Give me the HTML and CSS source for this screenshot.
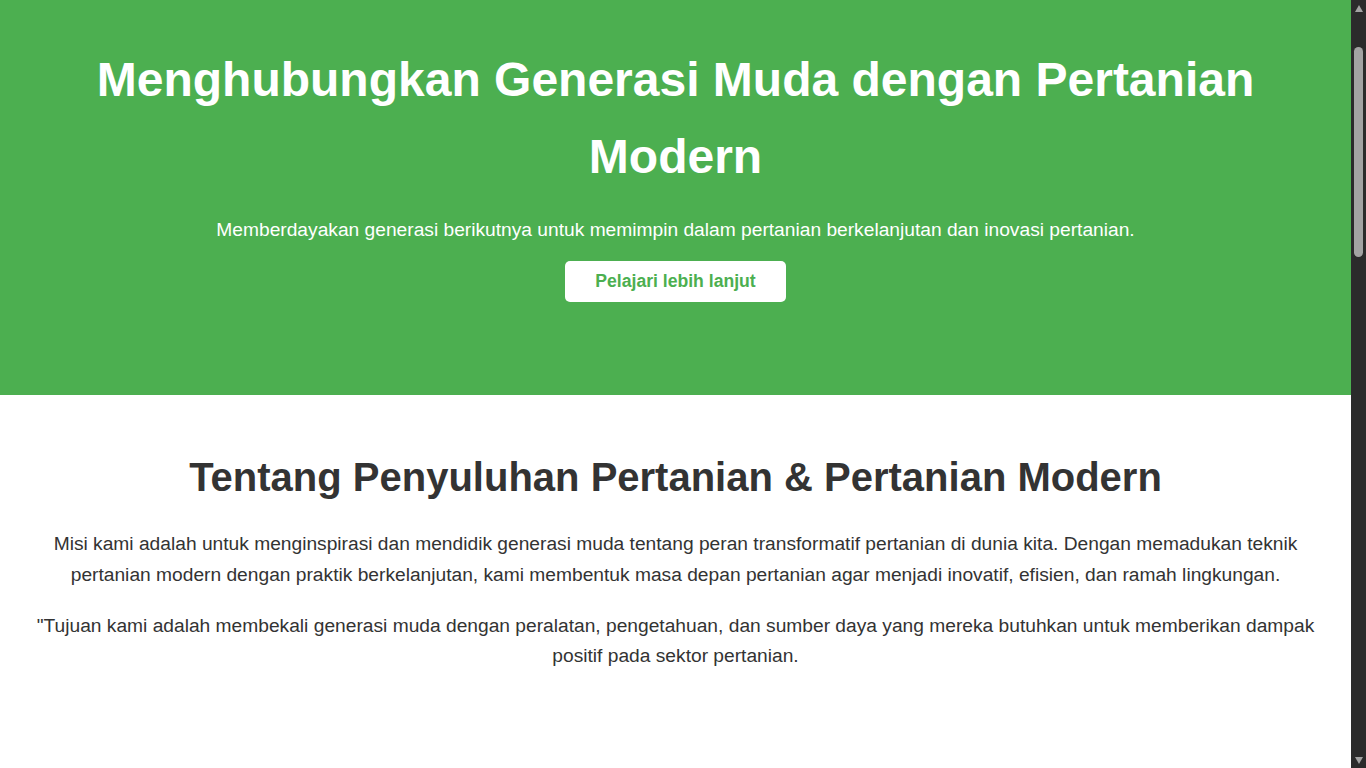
FILE: index.html
```html
<!DOCTYPE html>
<html lang="id">
<head>
<meta charset="UTF-8">
<title>Penyuluhan Pertanian &amp; Pertanian Modern</title>
<link rel="stylesheet" href="styles.css">
</head>
<body>
<div class="page">
  <header class="hero">
    <h1 class="hero-title">Menghubungkan Generasi Muda dengan Pertanian Modern</h1>
    <p class="hero-text">Memberdayakan generasi berikutnya untuk memimpin dalam pertanian berkelanjutan dan inovasi pertanian.</p>
    <button class="hero-button">Pelajari lebih lanjut</button>
  </header>
  <section class="about">
    <h2 class="section-title">Tentang Penyuluhan Pertanian &amp; Pertanian Modern</h2>
    <p class="section-text">Misi kami adalah untuk menginspirasi dan mendidik generasi muda tentang peran transformatif pertanian di dunia kita. Dengan memadukan teknik pertanian modern dengan praktik berkelanjutan, kami membentuk masa depan pertanian agar menjadi inovatif, efisien, dan ramah lingkungan.</p>
    <p class="section-text">"Tujuan kami adalah membekali generasi muda dengan peralatan, pengetahuan, dan sumber daya yang mereka butuhkan untuk memberikan dampak positif pada sektor pertanian.</p>
  </section>
  <section class="programs">
    <h2 class="section-title">Program Kami</h2>
    <div class="cards">
      <div class="card"><h3>Pertanian Cerdas</h3><p>Belajar menggunakan teknologi sensor dan data untuk meningkatkan hasil panen.</p></div>
      <div class="card"><h3>Hidroponik</h3><p>Teknik budidaya tanaman tanpa tanah yang hemat air dan ruang.</p></div>
      <div class="card"><h3>Agribisnis</h3><p>Mengembangkan usaha pertanian yang menguntungkan dan berkelanjutan.</p></div>
    </div>
  </section>
  <section class="contact">
    <h2 class="section-title">Hubungi Kami</h2>
    <p class="section-text">Bergabunglah bersama kami untuk membangun masa depan pertanian Indonesia.</p>
  </section>
  <footer class="footer">
    <p>&copy; 2024 Penyuluhan Pertanian. Semua hak dilindungi.</p>
  </footer>
</div>
<div class="scrollbar" aria-hidden="true">
  <div class="scroll-arrow up"></div>
  <div class="scroll-track"><div class="scroll-thumb"></div></div>
  <div class="scroll-arrow down"></div>
</div>
</body>
</html>
```
FILE: styles.css
```css
html {
  background: #ffffff;
}
body {
  margin: 0;
  font-family: "Liberation Sans", Arial, sans-serif;
  line-height: 1.6;
  color: #333333;
  background: #ffffff;
}
.page {
  margin-right: 15px;
}
.hero {
  background: #4CAF50;
  color: #ffffff;
  text-align: center;
  padding: 42px 20px 93px;
}
.hero-title {
  font-size: 48px;
  margin: 0 0 19px;
}
.hero-text {
  font-size: 19.2px;
  margin: 0 0 16px;
}
.hero-button {
  display: block;
  margin: 0 auto;
  background: #ffffff;
  color: #4CAF50;
  border: none;
  border-radius: 5px;
  padding: 10px 30px;
  font-family: "Liberation Sans", Arial, sans-serif;
  font-size: 17.6px;
  font-weight: bold;
  cursor: pointer;
}
.about,
.programs,
.contact {
  padding: 50px 20px;
  text-align: center;
}
.section-title {
  font-size: 40px;
  margin: 0 0 20px;
}
.section-text {
  font-size: 19.2px;
  line-height: 1.6;
  margin: 0 0 20px;
}
.programs {
  padding-top: 300px;
}
.cards {
  display: flex;
  gap: 20px;
  justify-content: center;
}
.card {
  background: #f4f4f4;
  border-radius: 8px;
  padding: 20px;
  width: 300px;
}
.contact {
  padding-bottom: 600px;
}
.footer {
  background: #333333;
  color: #ffffff;
  text-align: center;
  padding: 20px;
}

/* decorative dark scrollbar, drawn over the right edge */
.scrollbar {
  position: fixed;
  top: 0;
  right: 0;
  bottom: 0;
  width: 15px;
  background: #2b2b2b;
  display: flex;
  flex-direction: column;
  align-items: center;
}
.scroll-arrow {
  width: 0;
  height: 0;
  border-left: 4.5px solid transparent;
  border-right: 4.5px solid transparent;
  flex: none;
}
.scroll-arrow.up {
  margin-top: 5px;
  border-bottom: 7px solid #a3a3a3;
}
.scroll-arrow.down {
  margin-bottom: 4px;
  border-top: 7px solid #a3a3a3;
}
.scroll-track {
  flex: 1;
  width: 9px;
  padding-top: 35px;
}
.scroll-thumb {
  width: 9px;
  height: 210px;
  background: #a3a3a3;
  border-radius: 5px;
}
```
